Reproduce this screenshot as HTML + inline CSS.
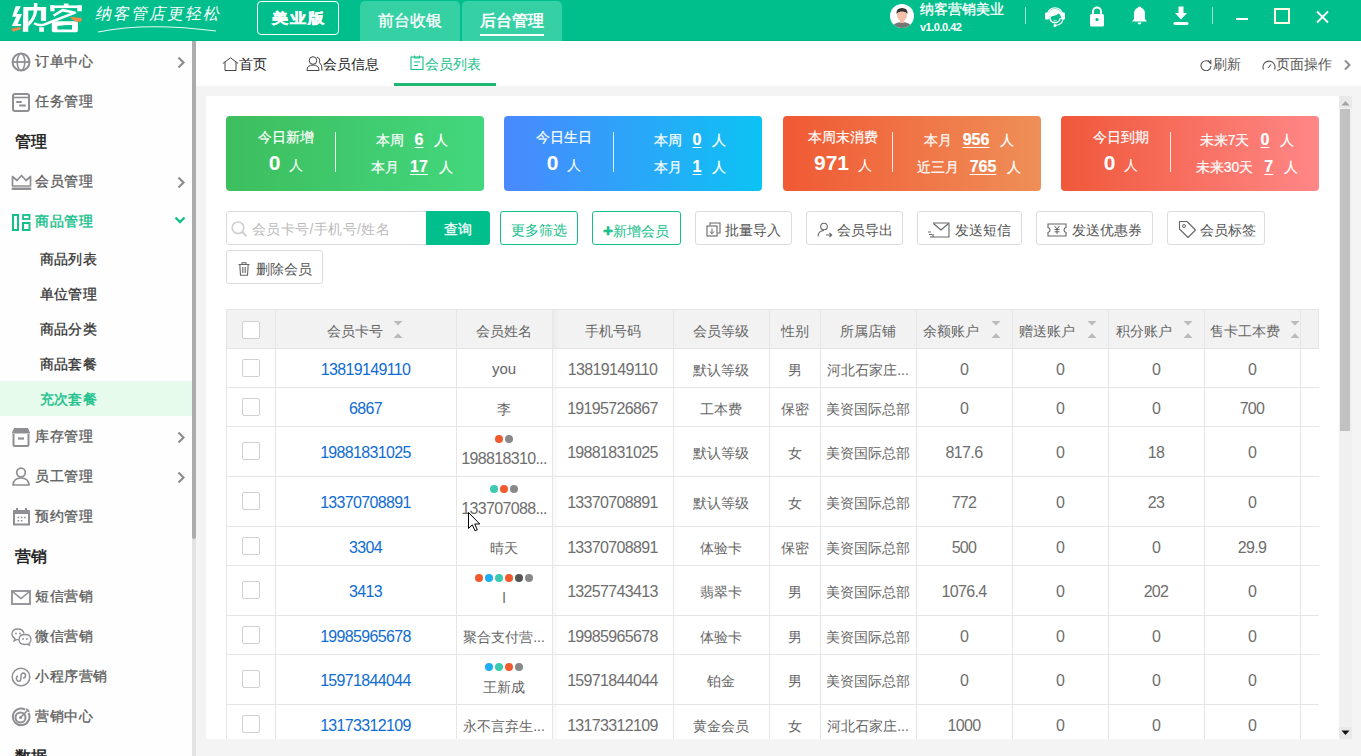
<!DOCTYPE html>
<html><head><meta charset="utf-8">
<style>
*{box-sizing:border-box;margin:0;padding:0}
html,body{width:1361px;height:756px;overflow:hidden}
body{position:relative;background:#f4f4f4;font-family:"Liberation Sans",sans-serif;font-size:14px;color:#555}
.abs{position:absolute}
#hdr{position:absolute;left:0;top:0;width:1361px;height:41px;background:#00bf8c}
#side{position:absolute;left:0;top:41px;width:192px;height:715px;background:#fefefe;overflow:hidden}
#sbar{position:absolute;left:192px;top:41px;width:4px;height:715px;background:#e3e3e3}
#sthumb{position:absolute;left:192px;top:41px;width:4px;height:498px;background:#adadad;border-radius:0 0 2px 2px}
#tabs{position:absolute;left:196px;top:41px;width:1165px;height:45px;background:#fff}
#panel{position:absolute;left:206px;top:96px;width:1133px;height:643px;background:#fff;overflow:hidden}
#vscroll{position:absolute;left:1339px;top:96px;width:13px;height:643px;background:#f0f0f0}
.mi{position:absolute;left:0;width:192px;height:40px;line-height:40px;color:#5c5c5c;-webkit-text-stroke:0.3px #5c5c5c;letter-spacing:0.5px}
.mi .t{position:absolute;left:35px;top:0}
.mi svg{position:absolute}
.mi .chev{position:absolute;left:176px;top:15px}
.sec{position:absolute;left:15px;font-size:16px;color:#1a1a1a;-webkit-text-stroke:0.5px #1a1a1a;height:40px;line-height:42px;letter-spacing:-0.5px}
.sub{position:absolute;left:0;width:192px;height:35px;line-height:36px;color:#333;-webkit-text-stroke:0.3px #333;letter-spacing:0.2px}
.sub span{position:absolute;left:40px}
.card{position:absolute;top:20px;width:258px;height:75px;border-radius:4px;color:#fff}
.card .ttl{position:absolute;left:0;width:120px;top:11px;line-height:20px;text-align:center;white-space:nowrap;-webkit-text-stroke:0.2px #fff}
.card .big{position:absolute;left:0;width:120px;top:33px;line-height:28px;text-align:center;white-space:nowrap}
.card .big b{font-size:21px;margin-right:9px}
.card .dv{position:absolute;left:109px;top:16px;width:1px;height:40px;background:rgba(255,255,255,.85)}
.card .r{position:absolute;left:116px;width:140px;line-height:20px;text-align:center;white-space:nowrap;-webkit-text-stroke:0.2px #fff}
.card .r b{font-size:16px;text-decoration:underline;text-underline-offset:2px;text-decoration-thickness:1px;margin:0 11px}
.btn{position:absolute;top:115px;height:34px;border:1px solid #dcdcdc;border-radius:3px;line-height:37px;color:#555;white-space:nowrap;background:#fff}
.btn svg{position:absolute}
.btn span{position:absolute}
.gbtn{border-color:#14c08a;color:#14c08a}
.tb{position:absolute;left:20px;top:213px;width:1093px;height:440px}
.hl{position:absolute;left:0;width:1093px;height:1px;background:#e6e6e6}
.vl{position:absolute;top:0;width:1px;height:440px;background:#e6e6e6}
.c{position:absolute;text-align:center;white-space:nowrap;color:#666;line-height:20px}
.lk{color:#1a6fd0}
.n{font-size:16px;letter-spacing:-0.65px;color:#6e6e6e}
.lk.n{color:#0f6cd3}
.cb{position:absolute;left:16px;width:18px;height:18px;border:1px solid #d0d0d0;border-radius:2px;background:#fff}
.dots{position:absolute;left:0;width:100%;text-align:center;line-height:8px;font-size:0}
.dots i{display:inline-block;width:8px;height:8px;border-radius:50%;margin:0 1px}
.srt{position:absolute;width:10px;height:19px}
</style></head><body>
<div id="hdr">
 <div class="abs" style="left:0;top:40px;width:1361px;height:1px;background:#00b686"></div>
 <svg class="abs" style="left:8px;top:0" width="80" height="40" viewBox="0 0 1361 680"><g fill="#fff">
<path d="M130,105 H218 L150,240 H238 L165,410 H228 L212,442 H66 L138,285 H70 Z"/>
<path d="M262,120 H648 V178 H345 V540 H252 Z"/>
<rect x="560" y="120" width="88" height="235"/>
<rect x="530" y="465" width="82" height="75"/>
<path d="M440,50 H500 V175 Q480,330 345,455 V375 Q430,300 440,175 Z"/>
<rect x="720" y="92" width="535" height="45"/>
<rect x="720" y="92" width="72" height="100"/>
<rect x="1178" y="92" width="77" height="100"/>
<rect x="950" y="60" width="80" height="45"/>
<path fill-rule="evenodd" d="M745,385 Q745,360 780,360 H1160 Q1190,360 1190,390 V520 Q1190,550 1160,550 H775 Q745,550 745,520 Z M840,440 V500 H1090 V440 Z"/>
</g>
<path d="M775,268 L930,172 L1140,215 L650,405 Q540,455 445,395" stroke="#fff" stroke-width="44" fill="none" stroke-linejoin="round"/>
<path d="M840,440 H1090 V425 L1000,425 Z" fill="#00bf8c"/>
<path d="M52,488 L205,460 L225,492 L88,542 Z" fill="#f08a4b"/>
<path d="M1052,288 L1120,290 L1252,312 L1256,360 L1170,374 L1095,330 Z" fill="#f08a4b"/>
</svg>
 <div class="abs" style="left:96px;top:4px;font-size:16px;color:#fff;letter-spacing:2px;line-height:20px;transform:skewX(-12deg)">纳客管店更轻松</div>
 <svg class="abs" style="left:96px;top:22px" width="130" height="14"><path d="M2 10 Q50 0 120 9" stroke="#fff" stroke-width="1.2" fill="none" opacity="0.9"/></svg>
 <div class="abs" style="left:257px;top:1px;width:82px;height:34px;border:1px solid #fff;border-radius:4px"></div><div class="abs" style="left:257px;top:2px;width:82px;height:34px;color:#fff;font-size:14px;font-weight:bold;-webkit-text-stroke:0.5px #fff;letter-spacing:2px;text-indent:2px;text-align:center;line-height:32px;transform:scaleX(1.15)">美业版</div>
 <div class="abs" style="left:360px;top:1px;width:100px;height:40px;background:#36d0a5;border-radius:5px 5px 0 0;color:#fff;font-size:16px;-webkit-text-stroke:0.3px #fff;text-align:center;line-height:40px">前台收银</div>
 <div class="abs" style="left:462px;top:1px;width:100px;height:40px;background:#36d0a5;border-radius:5px 5px 0 0;color:#fff;font-size:16px;font-weight:bold;text-align:center;line-height:40px">后台管理</div>
 <div class="abs" style="left:480px;top:34px;width:64px;height:2px;background:#fff"></div>
 <svg class="abs" style="left:890px;top:4px" width="24" height="24" viewBox="0 0 24 24"><circle cx="12" cy="12" r="12" fill="#fff"/><clipPath id="avc"><circle cx="12" cy="12" r="12"/></clipPath><g clip-path="url(#avc)"><ellipse cx="12" cy="24" rx="10" ry="6" fill="#777"/><rect x="10" y="15" width="4" height="4" fill="#f3b9a2"/><ellipse cx="12" cy="11" rx="5" ry="6" fill="#f5c0aa"/><path d="M6.5 10 Q6 4 12 4 Q18 4 17.5 10 Q16 7 12 7.5 Q8 7 6.5 10Z" fill="#333"/></g></svg>
 <div class="abs" style="left:920px;top:0px;font-size:14px;color:#fff;line-height:18px;-webkit-text-stroke:0.3px #fff">纳客营销美业</div>
 <div class="abs" style="left:920px;top:20px;font-size:11px;color:#fff;font-weight:bold;line-height:14px;letter-spacing:-0.5px">v1.0.0.42</div>
 <div class="abs" style="left:1025px;top:7px;width:1px;height:17px;background:rgba(255,255,255,.6)"></div>
 <svg class="abs" style="left:1040px;top:2px" width="30" height="28" viewBox="0 0 30 28"><path d="M7.5 12 A7.8 8.5 0 0 1 22.5 12" stroke="#fff" stroke-width="1.4" fill="none"/><rect x="5" y="10.5" width="4" height="7" rx="1" fill="#fff"/><rect x="21" y="10.5" width="4" height="7" rx="1" fill="#fff"/><path d="M8.5 12.5 Q9 7 15 7 Q21 7 21.5 12.5 L21 15 Q19.5 11 18.5 11.5 Q17.5 13.5 14 13.8 Q11 14 10 16.5 Z" fill="#fff"/><path d="M9.8 15 Q10 20.5 15 20.8 Q19.5 20.5 20.3 16" stroke="#fff" stroke-width="1.4" fill="none"/><path d="M13.5 18.6 Q15 19.3 16.5 18.6" stroke="#fff" stroke-width=".8" fill="none"/><path d="M23 17 Q22.5 22.5 15.5 23.5" stroke="#fff" stroke-width="1.2" fill="none"/><circle cx="15" cy="23.5" r="1.5" fill="#fff"/></svg>
 <svg class="abs" style="left:1089px;top:6px" width="16" height="21" viewBox="0 0 16 21"><path d="M4 8 V5.5 A4 4 0 0 1 12 5.5 V8" stroke="#fff" stroke-width="2" fill="none"/><rect x="1" y="8" width="14" height="12.5" rx="1.5" fill="#fff"/><circle cx="8" cy="13.5" r="1.6" fill="#00bf8c"/></svg>
 <svg class="abs" style="left:1131px;top:6px" width="17" height="20" viewBox="0 0 17 20"><path d="M8.5 0.5 Q10 0.5 10.5 2 Q14 3 14 8 V13 L16 15.5 H1 L3 13 V8 Q3 3 6.5 2 Q7 0.5 8.5 0.5Z" fill="#fff"/><path d="M6.5 16.5 H10.5 Q10 18.5 8.5 18.5 Q7 18.5 6.5 16.5Z" fill="#fff"/></svg>
 <svg class="abs" style="left:1173px;top:6px" width="16" height="20" viewBox="0 0 16 20"><path d="M5.5 0.5 H10.5 V7 H14 L8 13.5 L2 7 H5.5Z" fill="#fff"/><rect x="0.5" y="16" width="15" height="3" rx="1.5" fill="#fff"/></svg>
 <div class="abs" style="left:1212px;top:7px;width:1px;height:17px;background:rgba(255,255,255,.6)"></div>
 <div class="abs" style="left:1236px;top:18px;width:12px;height:2px;background:#fff"></div>
 <div class="abs" style="left:1274px;top:8px;width:16px;height:16px;border:2px solid #fffde6"></div>
 <svg class="abs" style="left:1316px;top:10px" width="13" height="14" viewBox="0 0 13 14"><path d="M1 1.5 L12 12.5 M12 1.5 L1 12.5" stroke="#fff" stroke-width="1.8"/></svg>
</div>
<div id="side">
<div class="mi" style="top:0px"><svg style="left:11px;top:11px" width="20" height="20" viewBox="0 0 20 20"><circle cx="10" cy="10" r="8.5" stroke="#8e8e93" stroke-width="2" fill="none"/><ellipse cx="10" cy="10" rx="3.8" ry="8.5" stroke="#8e8e93" stroke-width="1.6" fill="none"/><path d="M1.5 10 H18.5" stroke="#8e8e93" stroke-width="1.8"/></svg><span class="t">订单中心</span><svg class="chev" width="10" height="13" viewBox="0 0 10 13"><path d="M2.5 1.5 L7.5 6.5 L2.5 11.5" stroke="#8e8e93" stroke-width="2.2" fill="none"/></svg></div>
<div class="mi" style="top:40px"><svg style="left:12px;top:12px" width="18" height="19" viewBox="0 0 18 19"><rect x="1" y="1" width="16" height="17" rx="2" stroke="#8e8e93" stroke-width="2" fill="none"/><path d="M1 4.5 H17" stroke="#8e8e93" stroke-width="1.6"/><path d="M5 9 H9 M8 12.5 H13" stroke="#8e8e93" stroke-width="2" stroke-linecap="round"/></svg><span class="t">任务管理</span></div>
<div class="sec" style="top:80px">管理</div>
<div class="mi" style="top:120px"><svg style="left:11px;top:13px" width="21" height="17" viewBox="0 0 21 17"><path d="M1.5 12 V2.5 L6 6.5 L10.5 1.5 L15 6.5 L19.5 2.5 V12Z" stroke="#8e8e93" stroke-width="1.7" fill="none" stroke-linejoin="round"/><rect x="0.5" y="13.5" width="20" height="2.5" rx="1.2" fill="#8e8e93"/></svg><span class="t">会员管理</span><svg class="chev" width="10" height="13" viewBox="0 0 10 13"><path d="M2.5 1.5 L7.5 6.5 L2.5 11.5" stroke="#8e8e93" stroke-width="2.2" fill="none"/></svg></div>
<div class="mi" style="top:160px;color:#14c08a;-webkit-text-stroke:0.4px #14c08a"><svg style="left:12px;top:13px" width="19" height="17" viewBox="0 0 19 17"><rect x="1" y="1" width="5" height="15" stroke="#14c08a" stroke-width="2" fill="none"/><rect x="11" y="1" width="6.5" height="4" stroke="#14c08a" stroke-width="1.8" fill="none"/><rect x="11" y="9" width="6.5" height="7" stroke="#14c08a" stroke-width="2" fill="none"/></svg><span class="t">商品管理</span><svg class="chev" style="left:174px;top:15px" width="12" height="9" viewBox="0 0 12 9"><path d="M1.5 1.5 L6 6 L10.5 1.5" stroke="#14c08a" stroke-width="2.4" fill="none"/></svg></div>
<div class="sub" style="top:200px"><span>商品列表</span></div>
<div class="sub" style="top:235px"><span>单位管理</span></div>
<div class="sub" style="top:270px"><span>商品分类</span></div>
<div class="sub" style="top:305px"><span>商品套餐</span></div>
<div class="sub" style="top:340px;background:#e6fbec;color:#14c08a;-webkit-text-stroke:0.4px #14c08a"><span>充次套餐</span></div>
<div class="mi" style="top:375px"><svg style="left:11px;top:11px" width="20" height="20" viewBox="0 0 20 20"><path d="M3.5 1.5 H16.5 L18.5 6 H1.5Z" fill="#8e8e93" stroke="#8e8e93" stroke-width="1.2" stroke-linejoin="round"/><path d="M2.5 7 V17.5 Q2.5 19 4 19 H16 Q17.5 19 17.5 17.5 V7" stroke="#8e8e93" stroke-width="2" fill="none"/><path d="M7 11.5 H13" stroke="#8e8e93" stroke-width="2.2"/></svg><span class="t">库存管理</span><svg class="chev" width="10" height="13" viewBox="0 0 10 13"><path d="M2.5 1.5 L7.5 6.5 L2.5 11.5" stroke="#8e8e93" stroke-width="2.2" fill="none"/></svg></div>
<div class="mi" style="top:415px"><svg style="left:12px;top:11px" width="18" height="19" viewBox="0 0 18 19"><circle cx="9" cy="5.5" r="4.3" stroke="#8e8e93" stroke-width="1.7" fill="none"/><path d="M1 18 Q1.5 11 9 11 Q16.5 11 17 18Z" stroke="#8e8e93" stroke-width="1.7" fill="none" stroke-linejoin="round"/></svg><span class="t">员工管理</span><svg class="chev" width="10" height="13" viewBox="0 0 10 13"><path d="M2.5 1.5 L7.5 6.5 L2.5 11.5" stroke="#8e8e93" stroke-width="2.2" fill="none"/></svg></div>
<div class="mi" style="top:455px"><svg style="left:12px;top:11px" width="19" height="19" viewBox="0 0 19 19"><path d="M2 3 H17 Q18 3 18 4 V7 H1 V4 Q1 3 2 3Z" fill="#8e8e93"/><path d="M2 6 V17.5 H17 V6" stroke="#8e8e93" stroke-width="2" fill="none"/><path d="M5 1 V4 M14 1 V4" stroke="#8e8e93" stroke-width="2"/><path d="M5.5 10.5 h1.6 M8.8 10.5 h1.6 M12.1 10.5 h1.6 M5.5 13.8 h1.6 M8.8 13.8 h1.6" stroke="#8e8e93" stroke-width="1.5"/></svg><span class="t">预约管理</span></div>
<div class="sec" style="top:495px">营销</div>
<div class="mi" style="top:535px"><svg style="left:11px;top:14px" width="20" height="15" viewBox="0 0 20 15"><rect x="1" y="1" width="18" height="13" stroke="#8e8e93" stroke-width="1.8" fill="none"/><path d="M1.5 1.5 L10 8.5 L18.5 1.5" stroke="#8e8e93" stroke-width="1.6" fill="none"/></svg><span class="t">短信营销</span></div>
<div class="mi" style="top:575px"><svg style="left:11px;top:12px" width="21" height="18" viewBox="0 0 21 18"><path d="M13 5.5 Q12 1 7 1 Q1 1 1 6 Q1 9 4 10.5 L3 13 L6 11.5 Q7 11.8 8 11.8" stroke="#8e8e93" stroke-width="1.3" fill="none"/><path d="M14 6.5 Q20 6.5 20 11.5 Q20 14 18 15.3 L18.5 17.2 L16 16.2 Q15 16.5 14 16.5 Q8 16.5 8 11.5 Q8 6.5 14 6.5Z" stroke="#8e8e93" stroke-width="1.3" fill="none"/><circle cx="5" cy="5.5" r="0.9" fill="#8e8e93"/><circle cx="9" cy="5.5" r="0.9" fill="#8e8e93"/><circle cx="12" cy="11" r="0.9" fill="#8e8e93"/><circle cx="16" cy="11" r="0.9" fill="#8e8e93"/></svg><span class="t">微信营销</span></div>
<div class="mi" style="top:615px"><svg style="left:11px;top:11px" width="20" height="20" viewBox="0 0 20 20"><circle cx="10" cy="10" r="8.8" stroke="#8e8e93" stroke-width="1.5" fill="none"/><path d="M7 9 Q5 9.5 5.5 12.5 Q6.5 15 9 14 Q10 13 10 10.5 V9.5 Q10 6.5 12 6 Q14.5 6 14.5 8.5 Q14.5 11 12 11" stroke="#8e8e93" stroke-width="1.5" fill="none"/></svg><span class="t">小程序营销</span></div>
<div class="mi" style="top:655px"><svg style="left:11px;top:11px" width="20" height="20" viewBox="0 0 20 20"><path d="M17.5 6 A8.3 8.3 0 1 1 14 2.5" stroke="#8e8e93" stroke-width="2" fill="none"/><circle cx="9.5" cy="10.5" r="5" stroke="#8e8e93" stroke-width="2" fill="none"/><circle cx="9.5" cy="10.5" r="1.5" fill="#8e8e93"/><path d="M9.5 10.5 L17 3 M15 2 L17 3 L18 5" stroke="#8e8e93" stroke-width="1.6" fill="none"/></svg><span class="t">营销中心</span></div>
<div class="sec" style="top:695px">数据</div>
</div>

<div id="sbar"></div><div id="sthumb"></div>
<div id="tabs">
 <svg class="abs" style="left:26px;top:15px" width="17" height="15" viewBox="0 0 17 15"><path d="M0.8 7.5 L8.5 1.8 L16.2 7.5 M3 6 V14.5 H14 V6" stroke="#444" stroke-width="1" fill="none"/></svg>
 <div class="abs" style="left:43px;top:0;line-height:46px;color:#222">首页</div>
 <svg class="abs" style="left:110px;top:15px" width="17" height="15" viewBox="0 0 17 15"><circle cx="7" cy="4.5" r="3.8" stroke="#444" stroke-width="1" fill="none"/><path d="M1 14.5 Q1 9 7 9 Q13 9 13 14.5Z" stroke="#444" stroke-width="1" fill="none"/><path d="M11 1.2 Q14.5 2 13.5 6.5 Q16.5 9 16 14.5" stroke="#444" stroke-width="1" fill="none"/></svg>
 <div class="abs" style="left:127px;top:0;line-height:46px;color:#222">会员信息</div>
 <svg class="abs" style="left:214px;top:14px" width="14" height="15" viewBox="0 0 14 15"><rect x="1" y="2" width="12" height="12.5" stroke="#14c08a" stroke-width="1.1" fill="none"/><path d="M4.5 0.5 V3 H9.5 V0.5 M4 7 H10 M4 10.5 H8" stroke="#14c08a" stroke-width="1.1" fill="none"/></svg>
 <div class="abs" style="left:229px;top:0;line-height:46px;color:#14c08a">会员列表</div>
 <div class="abs" style="left:198px;top:42px;width:102px;height:3px;background:#1fb572"></div>
 <svg class="abs" style="left:1004px;top:18px" width="12" height="12" viewBox="0 0 12 12"><path d="M10.5 4.5 A5 5 0 1 0 11 7" stroke="#555" stroke-width="1.1" fill="none"/><path d="M8 1.5 L10.8 4.5 L10.8 0.8" stroke="#555" stroke-width="1.1" fill="none"/></svg>
 <div class="abs" style="left:1017px;top:0;line-height:46px;color:#555">刷新</div>
 <svg class="abs" style="left:1066px;top:18px" width="14" height="12" viewBox="0 0 14 12"><path d="M1.5 10.5 A6 6 0 1 1 12.5 10.5" stroke="#555" stroke-width="1.1" fill="none"/><path d="M6 9 L9 5.5" stroke="#555" stroke-width="1.1"/></svg>
 <div class="abs" style="left:1080px;top:0;line-height:46px;color:#555">页面操作</div>
 <svg class="abs" style="left:1147px;top:18px" width="9" height="12" viewBox="0 0 9 12"><path d="M2 1.5 L6.5 6 L2 10.5" stroke="#8e8e93" stroke-width="2" fill="none"/></svg>
</div>

<div id="panel">
<div class="card" style="left:20px;background:linear-gradient(90deg,#3dbe5f,#43d77d)">
 <div class="ttl">今日新增</div>
 <div class="big"><b>0</b>人</div>
 <div class="dv"></div>
 <div class="r" style="top:14px">本周<b>6</b>人</div>
 <div class="r" style="top:41px">本月<b>17</b>人</div>
</div>
<div class="card" style="left:298px;background:linear-gradient(90deg,#4a88fe,#0cc3f3)">
 <div class="ttl">今日生日</div>
 <div class="big"><b>0</b>人</div>
 <div class="dv"></div>
 <div class="r" style="top:14px">本周<b>0</b>人</div>
 <div class="r" style="top:41px">本月<b>1</b>人</div>
</div>
<div class="card" style="left:577px;background:linear-gradient(90deg,#f05934,#ef8f58)">
 <div class="ttl">本周末消费</div>
 <div class="big"><b>971</b>人</div>
 <div class="dv"></div>
 <div class="r" style="top:14px">本月<b>956</b>人</div>
 <div class="r" style="top:41px">近三月<b>765</b>人</div>
</div>
<div class="card" style="left:855px;background:linear-gradient(90deg,#f0583a,#ff8787)">
 <div class="ttl">今日到期</div>
 <div class="big"><b>0</b>人</div>
 <div class="dv"></div>
 <div class="r" style="top:14px">未来7天<b>0</b>人</div>
 <div class="r" style="top:41px">未来30天<b>7</b>人</div>
</div>
<div class="btn" style="left:20px;width:201px;border-radius:3px 0 0 3px">
 <svg style="left:4px;top:9px" width="17" height="16" viewBox="0 0 17 16"><circle cx="7" cy="6.8" r="5.8" stroke="#cfcfcf" stroke-width="1.7" fill="none"/><path d="M11.2 11 L15.5 15.2" stroke="#cfcfcf" stroke-width="1.9"/></svg>
 <span style="left:25px;top:-1px;color:#bbb;letter-spacing:0.4px">会员卡号/手机号/姓名</span></div>
<div class="btn" style="left:220px;width:64px;background:#00bf8c;border-color:#00bf8c;border-radius:0 3px 3px 0;color:#fff;text-align:center;line-height:35px;-webkit-text-stroke:0.3px #fff">查询</div>
<div class="btn gbtn" style="left:294px;width:78px"><span style="left:10px">更多筛选</span></div>
<div class="btn gbtn" style="left:386px;width:89px"><span style="left:10px"><b style="font-size:17px;-webkit-text-stroke:0.6px #14c08a">+</b>新增会员</span></div>
<div class="btn" style="left:489px;width:97px">
 <svg style="left:10px;top:10px" width="15" height="15" viewBox="0 0 15 15"><path d="M4 3.5 V1 H14 V11 H11.5" stroke="#666" stroke-width="1.1" fill="none"/><rect x="1" y="4" width="10" height="10" stroke="#666" stroke-width="1.1" fill="none"/><path d="M6 6.5 V11.5 M3.8 9.5 L6 11.7 L8.2 9.5" stroke="#666" stroke-width="1" fill="none"/></svg>
 <span style="left:29px">批量导入</span></div>
<div class="btn" style="left:600px;width:97px">
 <svg style="left:10px;top:10px" width="16" height="16" viewBox="0 0 16 16"><circle cx="7" cy="4.5" r="3.3" stroke="#666" stroke-width="1.1" fill="none"/><path d="M1 14.5 Q1 9 7 8.5 M9 13 H14.5 M12.5 11 L14.7 13 L12.5 15" stroke="#666" stroke-width="1.1" fill="none"/></svg>
 <span style="left:30px">会员导出</span></div>
<div class="btn" style="left:711px;width:105px">
 <svg style="left:9px;top:10px" width="23" height="16" viewBox="0 0 23 16"><path d="M6 1 H22 V15 H6 V12" stroke="#666" stroke-width="1.1" fill="none"/><path d="M6.5 1.5 L14 8 L21.5 1.5" stroke="#666" stroke-width="1.1" fill="none"/><path d="M1 10 H4 M2 12.5 H5 M3 15 H6" stroke="#666" stroke-width="1"/></svg>
 <span style="left:37px">发送短信</span></div>
<div class="btn" style="left:830px;width:117px">
 <svg style="left:10px;top:11px" width="20" height="14" viewBox="0 0 20 14"><path d="M1 1 H19 V4.5 Q17 5 17 7 Q17 9 19 9.5 V13 H1 V9.5 Q3 9 3 7 Q3 5 1 4.5Z" stroke="#666" stroke-width="1.1" fill="none"/><path d="M7.5 3 L10 6 L12.5 3 M10 6 V11 M7.5 6.5 H12.5 M7.5 8.8 H12.5" stroke="#666" stroke-width="1" fill="none"/></svg>
 <span style="left:35px">发送优惠券</span></div>
<div class="btn" style="left:961px;width:98px">
 <svg style="left:10px;top:8px" width="19" height="19" viewBox="0 0 19 19"><path d="M1.5 1.5 H9 L17.5 10 L10 17.5 L1.5 9Z" stroke="#666" stroke-width="1.1" fill="none" stroke-linejoin="round"/><circle cx="6" cy="6" r="1.5" stroke="#666" stroke-width="1" fill="none"/></svg>
 <span style="left:32px">会员标签</span></div>
<div class="btn" style="top:154px;left:20px;width:97px">
 <svg style="left:11px;top:11px" width="12" height="14" viewBox="0 0 12 14"><path d="M0.5 2.5 H11.5 M4 2.5 V0.8 H8 V2.5 M1.8 2.5 L2.5 13.2 H9.5 L10.2 2.5 M4.8 5 V11 M7.2 5 V11" stroke="#666" stroke-width="1.1" fill="none"/></svg>
 <span style="left:29px">删除会员</span></div>
<div class="tb">
<div class="abs" style="left:0;top:0;width:1093px;height:39px;background:#f2f2f2"></div>
<div class="abs" style="left:326px;top:0;width:8px;height:440px;background:linear-gradient(90deg,rgba(0,0,0,.035),rgba(0,0,0,0))"></div>
<div class="hl" style="top:0px"></div><div class="hl" style="top:39px"></div><div class="hl" style="top:78px"></div><div class="hl" style="top:117px"></div><div class="hl" style="top:167px"></div><div class="hl" style="top:217px"></div><div class="hl" style="top:256px"></div><div class="hl" style="top:306px"></div><div class="hl" style="top:345px"></div><div class="hl" style="top:395px"></div>
<div class="vl" style="left:0px"></div><div class="vl" style="left:49px"></div><div class="vl" style="left:230px"></div><div class="vl" style="left:326px"></div><div class="vl" style="left:447px"></div><div class="vl" style="left:543px"></div><div class="vl" style="left:594px"></div><div class="vl" style="left:690px"></div><div class="vl" style="left:786px"></div><div class="vl" style="left:882px"></div><div class="vl" style="left:978px"></div><div class="vl" style="left:1074px"></div><div class="vl" style="left:1092px;height:39px"></div>
<div class="cb" style="top:12px"></div>
<div class="srt" style="left:167px;top:11px"><svg width="10" height="19" viewBox="0 0 10 19" style="display:block"><path d="M0.5 1 H9.5 L5 5.5Z M0.5 18 H9.5 L5 13.2Z" fill="#bbb"/></svg></div><div class="srt" style="left:765px;top:11px"><svg width="10" height="19" viewBox="0 0 10 19" style="display:block"><path d="M0.5 1 H9.5 L5 5.5Z M0.5 18 H9.5 L5 13.2Z" fill="#bbb"/></svg></div><div class="srt" style="left:861px;top:11px"><svg width="10" height="19" viewBox="0 0 10 19" style="display:block"><path d="M0.5 1 H9.5 L5 5.5Z M0.5 18 H9.5 L5 13.2Z" fill="#bbb"/></svg></div><div class="srt" style="left:957px;top:11px"><svg width="10" height="19" viewBox="0 0 10 19" style="display:block"><path d="M0.5 1 H9.5 L5 5.5Z M0.5 18 H9.5 L5 13.2Z" fill="#bbb"/></svg></div><div class="srt" style="left:1064px;top:11px"><svg width="10" height="19" viewBox="0 0 10 19" style="display:block"><path d="M0.5 1 H9.5 L5 5.5Z M0.5 18 H9.5 L5 13.2Z" fill="#bbb"/></svg></div><div class="c" style="left:101px;top:12px;text-align:left">会员卡号</div><div class="c" style="left:697px;top:12px;text-align:left">余额账户</div><div class="c" style="left:793px;top:12px;text-align:left">赠送账户</div><div class="c" style="left:890px;top:12px;text-align:left">积分账户</div><div class="c" style="left:984px;top:12px;text-align:left">售卡工本费</div><div class="c" style="left:230px;width:96px;top:12px">会员姓名</div><div class="c" style="left:326px;width:121px;top:12px">手机号码</div><div class="c" style="left:447px;width:96px;top:12px">会员等级</div><div class="c" style="left:543px;width:51px;top:12px">性别</div><div class="c" style="left:594px;width:96px;top:12px">所属店铺</div>
<div class="cb" style="top:50px"></div><div class="c lk n" style="left:49px;width:181px;top:51px">13819149110</div><div class="c" style="left:230px;width:96px;top:50px;font-size:15px">you</div><div class="c n" style="left:326px;width:121px;top:51px">13819149110</div><div class="c" style="left:447px;width:96px;top:51px">默认等级</div><div class="c" style="left:543px;width:51px;top:51px">男</div><div class="c" style="left:594px;width:96px;top:51px">河北石家庄...</div><div class="c n" style="left:690px;width:96px;top:51px">0</div><div class="c n" style="left:786px;width:96px;top:51px">0</div><div class="c n" style="left:882px;width:96px;top:51px">0</div><div class="c n" style="left:978px;width:96px;top:51px">0</div>
<div class="cb" style="top:89px"></div><div class="c lk n" style="left:49px;width:181px;top:90px">6867</div><div class="c" style="left:230px;width:96px;top:90px">李</div><div class="c n" style="left:326px;width:121px;top:90px">19195726867</div><div class="c" style="left:447px;width:96px;top:90px">工本费</div><div class="c" style="left:543px;width:51px;top:90px">保密</div><div class="c" style="left:594px;width:96px;top:90px">美资国际总部</div><div class="c n" style="left:690px;width:96px;top:90px">0</div><div class="c n" style="left:786px;width:96px;top:90px">0</div><div class="c n" style="left:882px;width:96px;top:90px">0</div><div class="c n" style="left:978px;width:96px;top:90px">700</div>
<div class="cb" style="top:133px"></div><div class="c lk n" style="left:49px;width:181px;top:134px">19881831025</div><div class="abs" style="left:230px;width:96px;top:126px;height:8px"><div class="dots"><i style="background:#f15a2e"></i><i style="background:#888"></i></div></div><div class="c n" style="left:230px;width:96px;top:140px">198818310...</div><div class="c n" style="left:326px;width:121px;top:134px">19881831025</div><div class="c" style="left:447px;width:96px;top:134px">默认等级</div><div class="c" style="left:543px;width:51px;top:134px">女</div><div class="c" style="left:594px;width:96px;top:134px">美资国际总部</div><div class="c n" style="left:690px;width:96px;top:134px">817.6</div><div class="c n" style="left:786px;width:96px;top:134px">0</div><div class="c n" style="left:882px;width:96px;top:134px">18</div><div class="c n" style="left:978px;width:96px;top:134px">0</div>
<div class="cb" style="top:183px"></div><div class="c lk n" style="left:49px;width:181px;top:184px">13370708891</div><div class="abs" style="left:230px;width:96px;top:176px;height:8px"><div class="dots"><i style="background:#3ccbb0"></i><i style="background:#f15a2e"></i><i style="background:#888"></i></div></div><div class="c n" style="left:230px;width:96px;top:190px">133707088...</div><div class="c n" style="left:326px;width:121px;top:184px">13370708891</div><div class="c" style="left:447px;width:96px;top:184px">默认等级</div><div class="c" style="left:543px;width:51px;top:184px">女</div><div class="c" style="left:594px;width:96px;top:184px">美资国际总部</div><div class="c n" style="left:690px;width:96px;top:184px">772</div><div class="c n" style="left:786px;width:96px;top:184px">0</div><div class="c n" style="left:882px;width:96px;top:184px">23</div><div class="c n" style="left:978px;width:96px;top:184px">0</div>
<div class="cb" style="top:228px"></div><div class="c lk n" style="left:49px;width:181px;top:229px">3304</div><div class="c" style="left:230px;width:96px;top:229px">晴天</div><div class="c n" style="left:326px;width:121px;top:229px">13370708891</div><div class="c" style="left:447px;width:96px;top:229px">体验卡</div><div class="c" style="left:543px;width:51px;top:229px">保密</div><div class="c" style="left:594px;width:96px;top:229px">美资国际总部</div><div class="c n" style="left:690px;width:96px;top:229px">500</div><div class="c n" style="left:786px;width:96px;top:229px">0</div><div class="c n" style="left:882px;width:96px;top:229px">0</div><div class="c n" style="left:978px;width:96px;top:229px">29.9</div>
<div class="cb" style="top:272px"></div><div class="c lk n" style="left:49px;width:181px;top:273px">3413</div><div class="abs" style="left:230px;width:96px;top:265px;height:8px"><div class="dots"><i style="background:#f15a2e"></i><i style="background:#1eadf0"></i><i style="background:#3ccbb0"></i><i style="background:#f15a2e"></i><i style="background:#555"></i><i style="background:#888"></i></div></div><div class="c" style="left:230px;width:96px;top:279px">l</div><div class="c n" style="left:326px;width:121px;top:273px">13257743413</div><div class="c" style="left:447px;width:96px;top:273px">翡翠卡</div><div class="c" style="left:543px;width:51px;top:273px">男</div><div class="c" style="left:594px;width:96px;top:273px">美资国际总部</div><div class="c n" style="left:690px;width:96px;top:273px">1076.4</div><div class="c n" style="left:786px;width:96px;top:273px">0</div><div class="c n" style="left:882px;width:96px;top:273px">202</div><div class="c n" style="left:978px;width:96px;top:273px">0</div>
<div class="cb" style="top:317px"></div><div class="c lk n" style="left:49px;width:181px;top:318px">19985965678</div><div class="c" style="left:230px;width:96px;top:318px">聚合支付营...</div><div class="c n" style="left:326px;width:121px;top:318px">19985965678</div><div class="c" style="left:447px;width:96px;top:318px">体验卡</div><div class="c" style="left:543px;width:51px;top:318px">男</div><div class="c" style="left:594px;width:96px;top:318px">美资国际总部</div><div class="c n" style="left:690px;width:96px;top:318px">0</div><div class="c n" style="left:786px;width:96px;top:318px">0</div><div class="c n" style="left:882px;width:96px;top:318px">0</div><div class="c n" style="left:978px;width:96px;top:318px">0</div>
<div class="cb" style="top:361px"></div><div class="c lk n" style="left:49px;width:181px;top:362px">15971844044</div><div class="abs" style="left:230px;width:96px;top:354px;height:8px"><div class="dots"><i style="background:#1eadf0"></i><i style="background:#3ccbb0"></i><i style="background:#f15a2e"></i><i style="background:#888"></i></div></div><div class="c" style="left:230px;width:96px;top:368px">王新成</div><div class="c n" style="left:326px;width:121px;top:362px">15971844044</div><div class="c" style="left:447px;width:96px;top:362px">铂金</div><div class="c" style="left:543px;width:51px;top:362px">男</div><div class="c" style="left:594px;width:96px;top:362px">美资国际总部</div><div class="c n" style="left:690px;width:96px;top:362px">0</div><div class="c n" style="left:786px;width:96px;top:362px">0</div><div class="c n" style="left:882px;width:96px;top:362px">0</div><div class="c n" style="left:978px;width:96px;top:362px">0</div>
<div class="cb" style="top:406px"></div><div class="c lk n" style="left:49px;width:181px;top:407px">13173312109</div><div class="c" style="left:230px;width:96px;top:407px">永不言弃生...</div><div class="c n" style="left:326px;width:121px;top:407px">13173312109</div><div class="c" style="left:447px;width:96px;top:407px">黄金会员</div><div class="c" style="left:543px;width:51px;top:407px">女</div><div class="c" style="left:594px;width:96px;top:407px">河北石家庄...</div><div class="c n" style="left:690px;width:96px;top:407px">1000</div><div class="c n" style="left:786px;width:96px;top:407px">0</div><div class="c n" style="left:882px;width:96px;top:407px">0</div><div class="c n" style="left:978px;width:96px;top:407px">0</div>
</div>
</div>

<div id="vscroll">
 <div class="abs" style="left:0;top:0;width:13px;height:12px;background:#e9e9e9"></div>
 <svg class="abs" style="left:2px;top:4px" width="9" height="6" viewBox="0 0 9 6"><path d="M0.5 5.5 L4.5 1 L8.5 5.5Z" fill="#a3a3a3"/></svg>
 <div class="abs" style="left:1px;top:13px;width:10px;height:322px;background:#c1c1c1"></div>
 <div class="abs" style="left:0;top:631px;width:13px;height:12px;background:#e9e9e9"></div>
 <svg class="abs" style="left:2px;top:634px" width="9" height="6" viewBox="0 0 9 6"><path d="M0.5 0.5 L4.5 5 L8.5 0.5Z" fill="#111"/></svg>
</div>
<svg class="abs" style="left:468px;top:512px" width="13" height="20" viewBox="0 0 13 20"><path d="M0.5 0.5 V16.5 L4.3 12.8 L7 18.8 L9.3 17.8 L6.7 12 H11.8Z" fill="#fff" stroke="#000" stroke-width="1" stroke-linejoin="miter"/></svg>
</body></html>
